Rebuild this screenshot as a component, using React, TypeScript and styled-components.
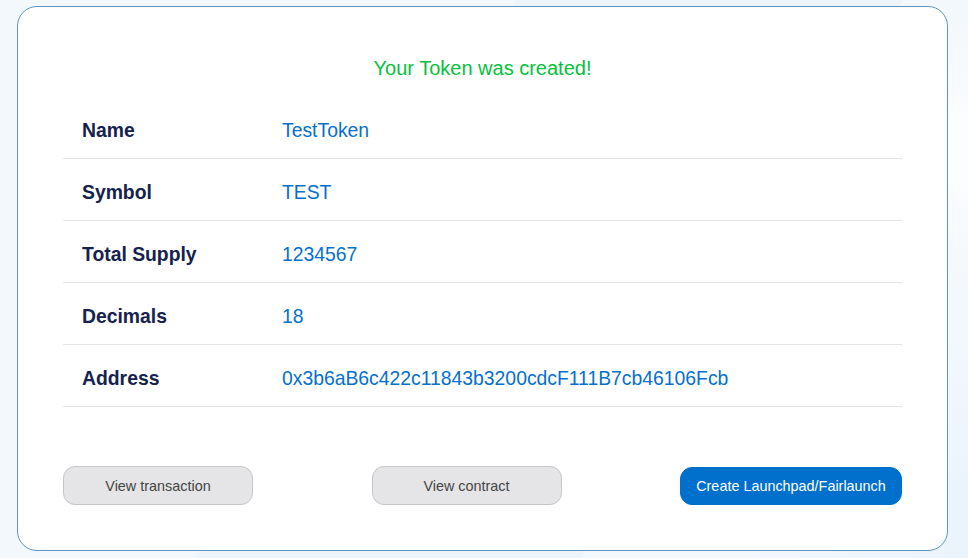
import React from "react";
import styled, { createGlobalStyle } from "styled-components";

const GlobalStyle = createGlobalStyle`
  html, body {
    margin: 0;
    padding: 0;
  }
  body {
    font-family: "Liberation Sans", Arial, Helvetica, sans-serif;
    background-color: #f3f8fc;
    background-image:
      radial-gradient(ellipse 260px 140px at 1010px 150px, #ffffff 0%, #f6fafd 60%, rgba(246,250,253,0) 100%),
      radial-gradient(ellipse 300px 200px at 1000px 520px, #eaf3fb 0%, rgba(234,243,251,0) 100%),
      linear-gradient(120deg, rgba(234,243,251,0) 0%, rgba(234,243,251,0) 40%, #edf5fb 40%, #edf5fb 70%, rgba(234,243,251,0) 70%);
  }
`;

const Page = styled.div`
  min-height: 558px;
  box-sizing: border-box;
  padding: 6px 20px 7px 17px;
  display: flex;
  align-items: flex-start;
`;

const Card = styled.div`
  width: 931px;
  height: 545px;
  box-sizing: border-box;
  background: #ffffff;
  border: 1px solid #5f94bf;
  border-radius: 20px;
  padding: 50px 45px 45px;
  display: flex;
  flex-direction: column;
`;

const Title = styled.div`
  text-align: center;
  color: #05c23d;
  font-size: 20px;
  line-height: 23px;
  margin-bottom: 17px;
`;

const Table = styled.div`
  display: flex;
  flex-direction: column;
`;

const Row = styled.div`
  display: grid;
  grid-template-columns: 219px 1fr;
  border-bottom: 1px solid #e3e4e6;
  padding: 22px 0 17px;
  font-size: 19.35px;
  line-height: 22px;
`;

const Label = styled.div`
  padding-left: 19px;
  font-weight: 700;
  color: #15224e;
`;

const Value = styled.div`
  color: #0570cd;
`;

const ButtonRow = styled.div`
  margin-top: 59px;
  display: flex;
  justify-content: space-between;
  align-items: center;
`;

const Button = styled.button<{ $primary?: boolean }>`
  box-sizing: border-box;
  height: ${(p) => (p.$primary ? "38px" : "39px")};
  width: ${(p) => (p.$primary ? "222px" : "190px")};
  border-radius: 12px;
  border: 1px solid ${(p) => (p.$primary ? "#0070cc" : "#c6c6c8")};
  background: ${(p) => (p.$primary ? "#0070cc" : "#e5e5e7")};
  color: ${(p) => (p.$primary ? "#ffffff" : "#444444")};
  font-family: "Liberation Sans", Arial, Helvetica, sans-serif;
  font-size: 14.4px;
  padding: 0;
  cursor: pointer;
`;

const rows: [string, string][] = [
  ["Name", "TestToken"],
  ["Symbol", "TEST"],
  ["Total Supply", "1234567"],
  ["Decimals", "18"],
  ["Address", "0x3b6aB6c422c11843b3200cdcF111B7cb46106Fcb"],
];

export default function App() {
  return (
    <>
      <GlobalStyle />
      <Page>
        <Card>
          <Title>Your Token was created!</Title>
          <Table>
            {rows.map(([label, value]) => (
              <Row key={label}>
                <Label>{label}</Label>
                <Value>{value}</Value>
              </Row>
            ))}
          </Table>
          <ButtonRow>
            <Button>View transaction</Button>
            <Button>View contract</Button>
            <Button $primary>Create Launchpad/Fairlaunch</Button>
          </ButtonRow>
        </Card>
      </Page>
    </>
  );
}
